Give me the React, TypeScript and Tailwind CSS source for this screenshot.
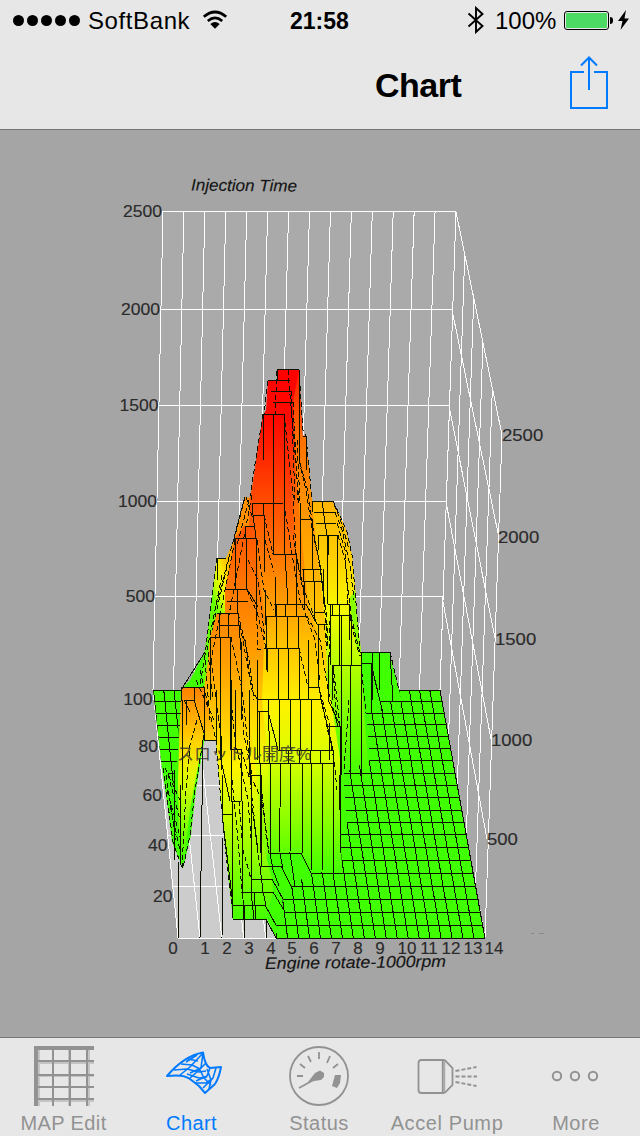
import React from "react";

type Stop = [number, string];

// x / y ranges are in screen points, the svg viewBox starts under the nav bar
const BACK_Y = [211, 309, 405, 501, 596, 690];
const BACK_RIGHT = [456, 452, 449, 446, 442, 440];
const SIDE_END = [
  [502, 435],
  [499, 538],
  [495, 638],
  [491, 739],
  [487, 839],
  [485, 938],
];
const DEPTH = [0, 0.19, 0.385, 0.585, 0.79, 1];

const GRADIENTS: { id: string; y1: number; y2: number; stops: Stop[] }[] = [
  {
    id: "spire",
    y1: 370,
    y2: 600,
    stops: [[0, "#ff0000"], [0.22, "#ff0c00"], [0.4, "#ff4000"], [0.6, "#ff7000"], [1, "#ffa000"]],
  },
  {
    id: "spireSide",
    y1: 370,
    y2: 640,
    stops: [[0, "#ff1800"], [0.25, "#ff7000"], [0.6, "#ffa000"], [1, "#ffd000"]],
  },
  {
    id: "shelf",
    y1: 501,
    y2: 775,
    stops: [[0, "#ffb400"], [0.2, "#ffce00"], [0.4, "#f6fb00"], [0.6, "#b4ff00"], [0.8, "#77ff00"], [1, "#44ff00"]],
  },
  {
    id: "mid",
    y1: 414,
    y2: 874,
    stops: [
      [0, "#ff0400"],
      [0.18, "#ff4800"],
      [0.3, "#ff7400"],
      [0.42, "#ffa000"],
      [0.52, "#ffca00"],
      [0.63, "#fff200"],
      [0.75, "#d8ff00"],
      [0.88, "#8cff00"],
      [1, "#40ff00"],
    ],
  },
  {
    id: "midLeft",
    y1: 526,
    y2: 866,
    stops: [[0, "#ff5400"], [0.2, "#ff7a00"], [0.4, "#ffa400"], [0.58, "#ffe000"], [0.7, "#e8ff00"], [0.85, "#a0ff00"], [1, "#66ff00"]],
  },
  {
    id: "left",
    y1: 613,
    y2: 919,
    stops: [[0, "#ff8200"], [0.15, "#ff9c00"], [0.35, "#ffcc00"], [0.5, "#fff400"], [0.65, "#ccff00"], [0.82, "#88ff00"], [1, "#44ff00"]],
  },
  {
    id: "spur",
    y1: 687,
    y2: 868,
    stops: [[0, "#ff8000"], [0.1, "#ff9a00"], [0.3, "#ffd200"], [0.48, "#e6f800"], [0.7, "#99ff00"], [1, "#33ff00"]],
  },
];

const FACES = [
  {
    fill: "#40ff00",
    points:
      "153,690 181,690 190,680 205,652 208,630 213,590 217,558 226,558 245,520 268,500 312,500 350,600 360,652 389,652 399,690 440,690 485,938 276,938 267,919 233,919 225,845 216,740 204,740 195,790 190,835 183,868 172,842 168,810 162,768",
  },
  { fill: "url(#backLeft)", points: "202,668 208,630 213,590 217,558 226,558 233,542 240,518 245,497 262,500 245,620 205,700" },
  { fill: "url(#spire)", points: "268,380 277,380 277,369 299,369 306,500 322,590 325,640 262,520 249,500 252,488 263,415 266,410" },
  { fill: "url(#spireSide)", points: "299,370 302,435 306,436 312,500 318,520 326,600 340,700 320,660 308,604 302,540 296,480 293,402" },
  { fill: "url(#shelf)", points: "312,501 332,501 340,515 346,530 352,555 355,585 357,615 361,652 363,700 369,775 344,775 344,873 335,873 325,620 316,540" },
  { fill: "#88ff00", points: "350,598 355,590 357,615 361,652 357,648 351,616" },
  { fill: "url(#mid)", points: "263,414 284,414 290,460 296,554 307,604 320,640 331,700 341,765 341,873 311,873 301,853 269,853 255,760 246,600 250,503" },
  { fill: "url(#midLeft)", points: "235,538 244,526 255,526 258,570 265,616 262,700 268,760 269,853 260,866 240,866 225,640 225,589" },
  { fill: "url(#left)", points: "210,637 217,613 238,613 245,690 256,770 262,840 272,879 273,892 266,919 233,919 225,845 216,740 204,740 204,690 208,660" },
  { fill: "url(#spur)", points: "181,687 204,687 216,740 204,740 204,733 195,790 190,835 183,868 179,835 178,780" },
  { fill: "#40ff00", points: "204,733 205,736 196,790 191,835 183,868 190,810" },
];

// [x1, x2, y]
const H_LINES: number[][] = [
  [277, 299, 369], [268, 278, 380], [271, 290, 380], [271, 292, 391], [273, 293, 402], [263, 285, 414],
  [303, 306, 436], [252, 283, 503], [254, 265, 515], [245, 255, 526], [235, 256, 538],
  [312, 333, 501], [314, 335, 512], [316, 336, 523], [318, 338, 535], [301, 311, 519],
  [273, 296, 554], [217, 226, 558], [302, 322, 569], [303, 324, 581], [225, 247, 589],
  [227, 248, 601], [217, 238, 613], [219, 240, 625], [210, 231, 637], [274, 307, 604],
  [265, 308, 616], [314, 325, 612], [317, 328, 624], [328, 349, 604], [330, 351, 615],
  [266, 299, 648], [360, 390, 652], [361, 371, 663], [332, 361, 665], [308, 319, 687],
  [181, 204, 687], [184, 194, 700], [153, 181, 690], [154, 181, 701], [156, 181, 713],
  [158, 180, 725], [159, 179, 737], [160, 178, 749], [161, 177, 761], [168, 175, 773],
  [257, 321, 699], [258, 268, 711], [328, 341, 726], [204, 216, 740], [278, 333, 750],
  [230, 241, 749], [249, 333, 763], [250, 260, 775], [231, 241, 801], [222, 232, 814],
  [269, 302, 853], [260, 281, 866], [251, 272, 879], [241, 273, 892], [232, 265, 905],
  [233, 266, 919], [399, 440, 690],
  [380, 442, 701], [366, 444, 713], [367, 446, 724], [368, 448, 736], [369, 450, 748],
  [370, 453, 760], [344, 455, 773], [344, 457, 785], [345, 459, 797], [346, 461, 810],
  [347, 464, 822], [340, 466, 834], [341, 468, 847], [342, 471, 860], [311, 473, 873],
  [291, 476, 886], [283, 478, 899], [285, 480, 912], [276, 483, 925], [276, 485, 938],
];

const SOLID = [
  "M178.500 938V862M200 938L203 740M222 938L223 838M244 938V919M266 938V919",
  "M263 414V460M273.5 414V503L274 554M284 414V503M299 370V460M277 370V381M306 436V470",
  "M252 503L253 515L256 538M263 503V515M264 515L265 572M273.5 503L273 554M284 503L285 554L288 604M296 554V604",
  "M235 538V589M246 538V589M256 538V620M237 589V613M247 589L258 607M245 526V538",
  "M210 637V700M220 637V700L222 770M230 637V680L231 750M219 613V637M228 613V637M238 613L241 650",
  "M217 558V580M300 503V519M300 519V580L301 569M312 519V569M313 569V581M303 569V581M323 569V604M304 581V610M314 581V620",
  "M312 501V512M322 501L325 523L327 535V604M337 535V604M318 535V550M328 535V555M347 600V604M332 604V615",
  "M330 604V640M339 604V665M349 604V640M341 615V665M330 615V665M351 615V665M332 665V700M341 665V775M350 665V775M361 665V775M361 652V663M371 663L380 701M371 663V713M379 652V690M390 652L393 701M372 652V700",
  "M275 577V616M276 604V616M285 604V616M296 604V616M306 604L317 624M265 590V625M266 616V670M276 616V648M287 616V648M298 616V648M267 648V672M278 648V699M288 648V699M299 648V699M308 640V687M318 625V687",
  "M257 699V760M268 699L270 763M279 699V750M290 699V750M300 699V750M311 699V750M321 699L333 750M319 687L321 699M308 687V699M328 655V700L340 725M329 726V760M341 700V726M340 726V853",
  "M259 711V763M268 711L278 750M288 750V763M299 750V763M310 750V763M320 750V763M333 750V763",
  "M250 763V780M260 763V853M270 763V853M281 763L279 853M291 763L290 853M302 763V853M312 763L311 873M323 763L322 873M333 763V873M339 775V810",
  "M241 640L242 720V801M235 690V749M231 680V749M220 700V760M221 760L230 801M241 749L242 801M231 749V801M249 690V740L250 775M257 660V700",
  "M222 775V814M232 814V918M222 814L233 905M242 801V890M232 801V814M251 775V879M261 775V866",
  "M242 879L244 919M251 847V892L254 919M261 853L262 866M260 866L263 892L266 905M270 853L273 870L279 886M280 853L283 870L291 886M290 853L293 873L295 886M301 853L311 873M281 866L291 886M272 879L283 899M273 892L285 912M265 905L276 925M266 919L276 938M244 905V919M254 892L256 919",
  "M184 700L190 712M194 687V700L204 733M204 687V740M216 690V740M181 687V701M182 700V790M174 770V860M180 785V862M186 700V725",
  "M181 690L205 652",
];

const DASHED = [
  "M268 381L264 414M277 371L275 414M288 370L290 395L294 440L299 503M291 391L295 500M293 402L298 500",
  "M263 414L250 496M284 414L293 495L296 554M299 370L303 430L306 436M306 436L312 500M297 440L300 503",
  "M299 460L306 490L312 530L318 555L324 600L328 650",
  "M300 463L308 492L314 535L320 565L326 610L328 640",
  "M245 497L234 540M249 500L237 545M252 495L228 620M246 497L255 526M244 500L215 610M235 540L211 660M229 558L212 630",
  "M217 558L208 630L205 655M222 575L207 650M205 655L200 685M208 652L213 700M211 660L220 730M205 660L210 720M200 670L216 740M196 680L214 720",
  "M333 501L341 518L347 532L352 555L357 615L360 650M335 512L342 530L350 565L354 600M337 523L345 550L348 604M338 535L345 560L351 615",
  "M334 504L343 527L349 550M351 616L358 645L361 656M350 616L355 640L360 656",
  "M265 540L274 572M264 515L273 554M284 503L292 554L300 600L315 640L320 680M296 554L304 590L317 624M293 535L298 565L305 600",
  "M257 540L264 590L274 610M247 590L257 612L266 648M256 600L258 650L267 648M299 648L308 687M307 616L320 640L328 690L338 726",
  "M248 560L258 580L265 640M240 625L252 690L257 699M231 637L242 690L250 763M245 640L252 690M238 613L249 660L254 700",
  "M320 692L330 726M321 699L334 760L337 790M268 711L278 750M250 775L262 800L269 853M241 749L250 780L258 850M231 700L235 740L248 800L252 850M241 690L244 735L252 775",
  "M239 801L243 850L251 879M251 800L256 840L260 866M232 780L238 840L242 892M260 770L266 835L269 853",
  "M324 625L327 650M329 620L330 660M333 665L340 726M361 664L366 713M371 664L380 701M390 652L399 690M333 670L337 725M380 701L383 713",
  "M204 735L195 790L190 835L183 868M197 720L190 745L186 790L182 868M163 768L173 842L182 868M166 775L176 840M165 768L180 800M168 774L180 820M167 790L181 840M170 805L181 855",
  "M216 740L220 790L225 845L233 915M349 700L344 770",
];

const LEFT_VALUES = [
  ["2500", 162, 217],
  ["2000", 160, 315],
  ["1500", 158.5, 411],
  ["1000", 157, 507],
  ["500", 155, 602],
  ["100", 152.5, 705],
  ["80", 158, 752],
  ["60", 162, 801],
  ["40", 167.5, 851],
  ["20", 172.5, 902],
] as const;

const RIGHT_VALUES = [
  ["2500", 502, 441],
  ["2000", 498, 543],
  ["1500", 495, 645],
  ["1000", 491, 746],
  ["500", 487, 845],
] as const;

const RPM_X = [173, 205, 227, 249, 271, 292, 314, 336, 358, 380, 407, 429, 451, 473, 494];

function SurfaceChart() {
  return (
    <svg
      className="block h-full w-full"
      viewBox="0 130 640 907"
      fontFamily='"Liberation Sans", Arial, "Noto Sans CJK JP", sans-serif'
    >
      <defs>
        {GRADIENTS.map((g) => (
          <linearGradient key={g.id} id={g.id} gradientUnits="userSpaceOnUse" x1="0" x2="0" y1={g.y1} y2={g.y2}>
            {g.stops.map(([offset, color]) => (
              <stop key={offset} offset={offset} stopColor={color} />
            ))}
          </linearGradient>
        ))}
        <linearGradient id="backLeft" gradientUnits="userSpaceOnUse" x1="209" y1="590" x2="247" y2="575">
          <stop offset="0" stopColor="#66ff00" />
          <stop offset="0.2" stopColor="#ccff00" />
          <stop offset="0.45" stopColor="#ffee00" />
          <stop offset="0.75" stopColor="#ffb000" />
          <stop offset="1" stopColor="#ff9000" />
        </linearGradient>
        <clipPath id="flat">
          <polygon points="399,690 440,690 486,938 276,938 276,925 283,899 291,886 311,873 342,873 341,834 348,822 344,773 370,760 366,713 380,701 402,701" />
        </clipPath>
        <clipPath id="flatLeft">
          <polygon points="153,690 181,690 175,785 162,768" />
        </clipPath>
      </defs>

      {/* walls and floor */}
      <polygon points="163,211 456,212 440,690 153,690" fill="#aaaaaa" />
      <polygon points="456,212 502,435 485,938 440,690" fill="#a8a8a8" />
      <polygon points="153,690 440,690 485,938 178,938" fill="#cccccc" />

      <g stroke="#ffffff" strokeWidth="1" shapeRendering="crispEdges" fill="none">
        {BACK_Y.map((y, i) => (
          <path
            key={y}
            d={`M${163 - i * 2} ${y + 0.4}L${BACK_RIGHT[i]} ${y + (i < 4 ? 0.9 : 0.4)}L${SIDE_END[i][0]} ${SIDE_END[i][1]}`}
          />
        ))}
        {Array.from({ length: 15 }, (_, i) => (
          <path key={i} d={`M${163 + i * 20.93} 211L${153 + i * 20.5} 690L${178 + i * 21.93} 938`} />
        ))}
        {DEPTH.map((d) => (
          <path
            key={d}
            d={`M${153 + 25 * d} ${690.3 + 248 * d}L${440 + 45 * d} ${690.3 + 248 * d}L${456 + 46 * d} ${212 + 223 * d}`}
          />
        ))}
      </g>

      {/* surface */}
      {FACES.map((face) => (
        <polygon key={face.points} points={face.points} fill={face.fill} />
      ))}

      <g stroke="#0c1200" strokeWidth="1" shapeRendering="crispEdges" fill="none">
        {H_LINES.map(([x1, x2, y], i) => (
          <path key={i} d={`M${x1} ${y + 0.5}H${x2}`} />
        ))}
        {SOLID.map((d) => (
          <path key={d} d={d} />
        ))}
        <g strokeDasharray="5 3">
          {DASHED.map((d) => (
            <path key={d} d={d} />
          ))}
        </g>
        <g clipPath="url(#flat)">
          {Array.from({ length: 20 }, (_, i) => i + 9).map((k) => (
            <path key={k} d={`M${153 + k * 10.25} 690L${178 + k * 10.96} 938`} />
          ))}
        </g>
        <g clipPath="url(#flatLeft)">
          {[0, 1, 2].map((k) => (
            <path key={k} d={`M${153.5 + k * 10.25} 690L${178 + k * 10.96} 938`} />
          ))}
        </g>
        <path d="M440 690L485 938" />
      </g>

      {/* labels */}
      <g fill="#2b2b2b" stroke="#2b2b2b" strokeWidth="0.15" fontSize="17">
        {LEFT_VALUES.map(([label, x, y]) => (
          <text key={label} x={x} y={y} textAnchor="end" textLength={label.length * 9.75} lengthAdjust="spacingAndGlyphs">
            {label}
          </text>
        ))}
        {RIGHT_VALUES.map(([label, x, y]) => (
          <text key={label} x={x} y={y} textLength={label.length * 10.3} lengthAdjust="spacingAndGlyphs">
            {label}
          </text>
        ))}
        {RPM_X.map((x, i) => (
          <text key={x} x={x} y="954" textAnchor="middle" fontSize="17">
            {i}
          </text>
        ))}
        <text x="177" y="760" fontSize="16.500" fillOpacity="0.8" strokeOpacity="0.7" textLength="134" lengthAdjust="spacingAndGlyphs">
          スロットル開度%
        </text>
      </g>
      <g fill="#151515" stroke="#151515" strokeWidth="0.15" fontSize="16.500" fontStyle="italic">
        <text x="191" y="190.500" textLength="106" lengthAdjust="spacingAndGlyphs" transform="rotate(0.6 191 191)">
          Injection Time
        </text>
        <text x="265" y="969" textLength="181" lengthAdjust="spacingAndGlyphs" transform="rotate(-0.7 265 969)">
          Engine rotate-1000rpm
        </text>
      </g>
      <path d="M531 933.500h3M539 933.500h5" stroke="#888888" />
    </svg>
  );
}

function StatusBar() {
  return (
    <div className="flex h-10 items-center text-[24px] leading-10 text-black">
      <div className="flex w-[290px] items-center pl-[13px]">
        <div className="flex gap-[3px]">
          {[0, 1, 2, 3, 4].map((i) => (
            <span key={i} className="size-[11px] rounded-full bg-black" />
          ))}
        </div>
        <span className="ml-2 w-[103px] pt-px tracking-[0.6px]">SoftBank</span>
        <svg className="ml-[11px]" width="26" height="20" viewBox="0 0 26 20" fill="none" stroke="#000">
          <path d="M1.800 6.800Q13-2.800 24.200 6.800" strokeWidth="2.800" />
          <path d="M5.800 11Q13 4.800 20.200 11" strokeWidth="2.600" />
          <path d="M8.300 14Q13 10 17.700 14L13 18.800Z" fill="#000" stroke="none" />
        </svg>
      </div>
      <span className="w-[60px] pt-px text-[23px] font-bold">21:58</span>
      <svg className="ml-[117px]" width="18" height="28" viewBox="0 0 18 28" fill="none" stroke="#000" strokeWidth="1.900">
        <path d="M1.500 7.500L15.500 20L9 26V2L15.500 8L1.500 20.500" />
      </svg>
      <span className="ml-[10px] w-[62px] pt-px">100%</span>
      <div className="ml-[7px] h-[19px] w-[45px] rounded-[3px] border border-black p-px">
        <div className="h-full rounded-[1px] bg-[#4cd964]" />
      </div>
      <span className="ml-px h-[7px] w-[3px] rounded-r-full bg-black" />
      <svg className="ml-[5px]" width="11" height="20" viewBox="0 0 11 20">
        <path d="M8 0L0 11h4.500L2.500 20L11 8.500H6.500Z" fill="#000" />
      </svg>
    </div>
  );
}

function MapIcon() {
  return (
    <svg width="60" height="60" viewBox="0 0 60 60" shapeRendering="crispEdges">
      <g fill="#c4c4c4">
        <path d="M4 16h56v2H4zM4 29h56v2H4zM4 40h56v1H4zM4 54h56v2H4zM4 4h2v56H4zM34 4h2v56h-2zM54 4h2v56h-2z" />
      </g>
      <g fill="#929292">
        <path d="M0 0h60v4H0zM0 0h4v60H0zM18 4h2v56h-2zM35 4h2v56h-2zM52 4h2v56h-2zM4 14h56v2H4zM4 28h56v2H4zM4 40h56v2H4zM4 52h56v2H4z" />
      </g>
    </svg>
  );
}

function ChartIcon() {
  return (
    <svg
      width="60"
      height="60"
      viewBox="162 1046 60 60"
      fill="none"
      stroke="#007aff"
      strokeWidth="1.600"
      strokeLinejoin="round"
      className="overflow-visible"
    >
      <path d="M167 1076Q184 1056 203 1052.500Q205 1066 210 1068L221 1067Q219 1078 215 1084L205 1093L199 1086L190 1079Q184 1074 167 1076Z" strokeWidth="2" />
      <path d="M174 1070L187 1069L199 1072L206 1071M181 1064L192 1065L200 1069M188 1059L198 1061" />
      <path d="M203 1053L190 1067L180 1075M203 1053L201 1068L190 1073M197 1055L186 1062" />
      <path d="M206 1063L198 1071L190 1078M210 1068L207 1076L196 1081M207 1069L211 1080L209 1089M216 1068L213 1078L203 1088M200 1070L204 1078L211 1085" />
      <path d="M187 1074L199 1078L207 1077M195 1083L206 1083L212 1079" />
    </svg>
  );
}

function GaugeIcon() {
  return (
    <svg width="60" height="60" viewBox="0 0 60 60" fill="none" stroke="#929292">
      <circle cx="30" cy="30" r="29" strokeWidth="1.800" />
      <path strokeWidth="1.800" d="M8 30h6M11 18l5 4M19 10l3 6M30 6v7M41 10l-3 7M49 18l-5 4" />
      <path d="M10 42L30 31" strokeWidth="1.800" />
      <path d="M19 36L26 27L31 24.500L35 27V31L32 34L25 35Z" fill="#929292" stroke="none" />
      <path d="M46 29l6 0l-1 8l-3 5l-5-2z" fill="#929292" stroke="none" />
    </svg>
  );
}

function PumpIcon() {
  return (
    <svg width="60" height="60" viewBox="416.500 1045 60 60" fill="none" stroke="#929292">
      <path d="M421 1059h22q2 0 4 3l5 5v17l-5 5q-2 3-4 3h-22q-3 0-3-3v-27q0-3 3-3z" strokeWidth="1.800" />
      <path d="M443 1060v31" strokeWidth="3.500" stroke="#aaaaaa" />
      <path d="M442 1060v31" strokeWidth="1" />
      <path d="M455 1070l21-4M455 1075.500h22M455 1081l21 4" strokeWidth="1.800" strokeDasharray="4 2" />
    </svg>
  );
}

function MoreIcon() {
  return (
    <svg width="60" height="60" viewBox="0 0 60 60" fill="none" stroke="#929292" strokeWidth="2">
      <circle cx="11" cy="30" r="4.200" />
      <circle cx="29" cy="30" r="4.200" />
      <circle cx="47" cy="30" r="4.200" />
    </svg>
  );
}

const TABS = [
  { label: "MAP Edit", icon: <MapIcon />, className: "w-[127px] tracking-[0.4px]" },
  { label: "Chart", icon: <ChartIcon />, active: true, className: "w-[129px] tracking-[0.4px]" },
  { label: "Status", icon: <GaugeIcon />, className: "w-[126px] tracking-[0.5px]" },
  { label: "Accel Pump", icon: <PumpIcon />, className: "w-[130px] tracking-[0.6px]" },
  { label: "More", icon: <MoreIcon />, className: "w-[128px] tracking-[0.5px]" },
];

export default function App() {
  return (
    <div
      className="flex h-[1136px] w-[640px] flex-col overflow-hidden bg-[#a5a5a5]"
      style={{ fontFamily: '"Liberation Sans", Arial, sans-serif' }}
    >
      <header className="h-[130px] shrink-0 border-b border-[#777777] bg-[#e7e7e7]">
        <StatusBar />
        <div className="flex h-[89px] items-center pl-[375px]">
          <h1 className="w-[194px] pt-px text-[34px] font-bold tracking-[-0.5px] text-black">Chart</h1>
          <svg className="-mt-[3px]" width="40" height="54" viewBox="0 0 40 54" fill="none" stroke="#007aff" strokeWidth="2">
            <path d="M15 16H2V52H38V16H25" />
            <path d="M20 34V2M12 9.500L20 1.500L28 9.500" />
          </svg>
        </div>
      </header>

      <main className="h-[907px] shrink-0">
        <SurfaceChart />
      </main>

      <nav className="flex h-[99px] shrink-0 border-t border-[#777777] bg-[#e7e7e7]">
        {TABS.map((tab) => (
          <button
            key={tab.label}
            className={`flex flex-col items-center pt-2 text-[20px] whitespace-nowrap ${tab.className} ${
              tab.active ? "text-[#007aff]" : "text-[#929292]"
            }`}
          >
            <span className="block size-[60px] shrink-0">{tab.icon}</span>
            <span className="pt-[5px] leading-[24px]">{tab.label}</span>
          </button>
        ))}
      </nav>
    </div>
  );
}
